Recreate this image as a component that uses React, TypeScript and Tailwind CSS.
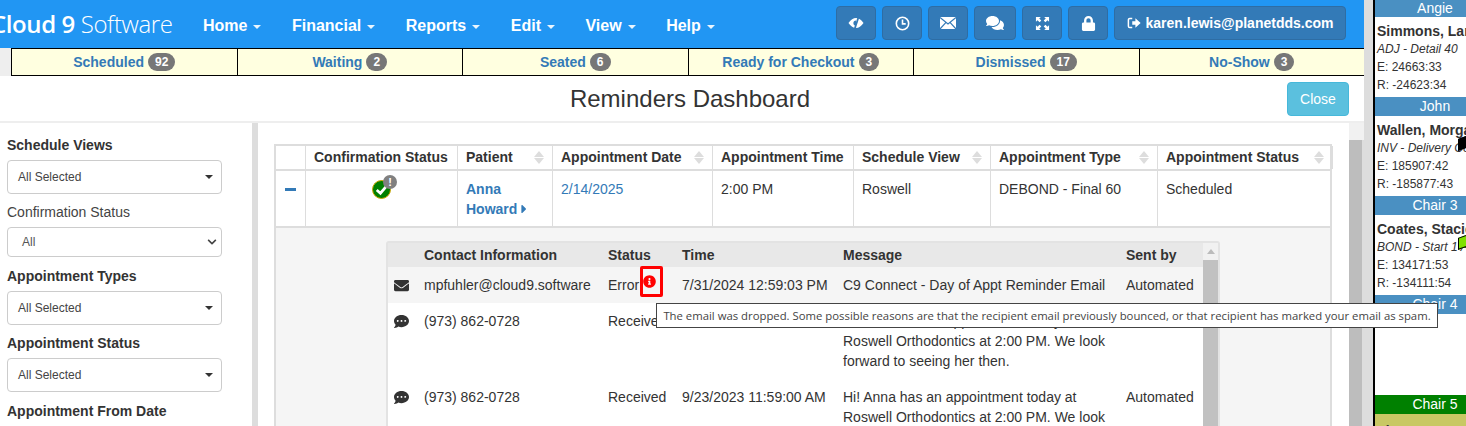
import React from 'react'
import { FaEnvelope, FaComments, FaCommentDots, FaLock, FaCaretRight, FaChevronDown, FaInfoCircle } from 'react-icons/fa'

const navItems = ['Home', 'Financial', 'Reports', 'Edit', 'View', 'Help']

const statusTabs = [
  { label: 'Scheduled', count: 92 },
  { label: 'Waiting', count: 2 },
  { label: 'Seated', count: 6 },
  { label: 'Ready for Checkout', count: 3 },
  { label: 'Dismissed', count: 17 },
  { label: 'No-Show', count: 3 },
]

const EyeClose = () => (
  <svg viewBox="0 0 16 16" className="h-[16px] w-[16px]">
    <path d="M0.5 8 Q4 3 8 3 Q12 3 15.5 8 Q12 13 8 13 Q4 13 0.5 8Z" fill="white" />
    <path d="M8 5.4 A2.6 2.6 0 0 0 8 10.6 Z" fill="#337ab7" />
    <path d="M10.8 1 L6.4 15" stroke="#337ab7" strokeWidth="1.8" />
  </svg>
)

const ClockIcon = () => (
  <svg viewBox="0 0 16 16" className="h-[15px] w-[15px]" fill="none" stroke="white" strokeWidth="1.7">
    <circle cx="8" cy="8" r="6.6" />
    <path d="M8 3.8 V8.4 H11.4" />
  </svg>
)

const MailIcon = () => (
  <svg viewBox="0 0 16 12" className="h-[12px] w-[16px]">
    <rect width="16" height="12" fill="white" />
    <path d="M0 0.5 L8 7 L16 0.5 M0 12 L5.8 5.6 M16 12 L10.2 5.6" fill="none" stroke="#337ab7" strokeWidth="1.2" />
  </svg>
)

const FullscreenIcon = () => (
  <svg viewBox="0 0 16 16" className="h-[15px] w-[15px]" fill="white">
    <path d="M1 1h5.2L4.5 2.7l2.2 2.2-1.8 1.8-2.2-2.2L1 6.2z" />
    <path d="M15 1H9.8l1.7 1.7-2.2 2.2 1.8 1.8 2.2-2.2L15 6.2z" />
    <path d="M1 15h5.2l-1.7-1.7 2.2-2.2-1.8-1.8-2.2 2.2L1 9.8z" />
    <path d="M15 15H9.8l1.7-1.7-2.2-2.2 1.8-1.8 2.2 2.2L15 9.8z" />
  </svg>
)

const LogoutIcon = () => (
  <svg viewBox="0 0 16 16" className="h-[14px] w-[14px]">
    <path d="M6 2.8H3.2a1.6 1.6 0 0 0-1.6 1.6v7.2a1.6 1.6 0 0 0 1.6 1.6H6" fill="none" stroke="white" strokeWidth="1.7" />
    <path d="M6 6h3.6V2.6L15.6 8l-6 5.4V10H6z" fill="white" />
  </svg>
)

const iconButtons = [
  { icon: <EyeClose />, w: 'w-[40px]' },
  { icon: <ClockIcon />, w: 'w-[40px]' },
  { icon: <MailIcon />, w: 'w-[40px]' },
  { icon: <FaComments size={18} />, w: 'w-[42px]' },
  { icon: <FullscreenIcon />, w: 'w-[40px]' },
  { icon: <FaLock size={15} />, w: 'w-[40px]' },
]

const columns = [
  { label: '', w: 'w-[30px]' },
  { label: 'Confirmation Status', w: 'w-[152px]' },
  { label: 'Patient', w: 'w-[95px]', sort: true },
  { label: 'Appointment Date', w: 'w-[160px]', sort: true },
  { label: 'Appointment Time', w: 'w-[141px]' },
  { label: 'Schedule View', w: 'w-[137px]', sort: true },
  { label: 'Appointment Type', w: 'w-[167px]', sort: true },
  { label: 'Appointment Status', w: 'w-[175px]', sort: true },
]

const chairs = [
  { name: 'Angie', h: 'h-[17px]', patient: 'Simmons, Lane', type: 'ADJ - Detail 40', e: 'E: 24663:33', r: 'R: -24623:34' },
  { name: 'John', h: 'h-[19px]', patient: 'Wallen, Morgan', type: 'INV - Delivery Consult', e: 'E: 185907:42', r: 'R: -185877:43', tag: 'bg-black' },
  { name: 'Chair 3', h: 'h-[19px]', patient: 'Coates, Stacie', type: 'BOND - Start 1 Arch', e: 'E: 134171:53', r: 'R: -134111:54', tag: 'bg-[#7fe000]' },
]

const messageRows = [
  { time: '', sent: '' },
  { time: '9/23/2023 11:59:00 AM', sent: 'Automated' },
]

const messageLines = ['Hi! Anna has an appointment today at', 'Roswell Orthodontics at 2:00 PM. We look', 'forward to seeing her then.']

const FilterSelect = ({ label }: { label: string }) => (
  <div className="mt-[8px] mb-[8px]">
    <div className="h-[20px] text-[14px] leading-[20px] font-bold text-[#333]">{label}</div>
    <div className="mt-[5px] flex h-[34px] w-[215px] items-center justify-between rounded-[4px] border border-[#ccc] bg-white pr-[8px] pl-[10px] text-[12px] text-[#444]">
      All Selected
      <span className="h-0 w-0 border-x-[4px] border-t-[4px] border-x-transparent border-t-[#333]" />
    </div>
  </div>
)

const SortIcon = () => (
  <span className="ml-auto flex shrink-0 flex-col gap-[1px]">
    <span className="h-0 w-0 border-x-[5px] border-b-[6px] border-x-transparent border-b-[#ddd]" />
    <span className="h-0 w-0 border-x-[5px] border-t-[6px] border-x-transparent border-t-[#ddd]" />
  </span>
)

export default function App() {
  return (
    <div className="flex h-[426px] w-[1466px] overflow-hidden bg-white font-['Liberation_Sans',Arial,sans-serif] text-[14px] text-[#333]">
      {/* main app column */}
      <div className="relative flex w-[1364px] shrink-0 flex-col">
        <header className="flex h-[48px] shrink-0 items-center bg-[#2196f3] text-white">
          <div className="-ml-[9px] w-[212px] shrink-0 font-['Open_Sans',sans-serif] text-[24px] leading-none tracking-[-0.4px] whitespace-nowrap">
            <span className="font-semibold">Cloud 9</span> <span className="font-light">Software</span>
          </div>
          <nav className="mt-[3px] flex gap-[30.5px]">
            {navItems.map((item) => (
              <span key={item} className="flex items-center gap-[6px] text-[16px] font-bold">
                {item}
                <span className="mt-[2px] h-0 w-0 border-x-[4px] border-t-[4px] border-x-transparent border-t-white/90" />
              </span>
            ))}
          </nav>
          <div className="mr-[18px] mb-[2px] ml-auto flex h-[34px] gap-[6px]">
            {iconButtons.map((b, i) => (
              <span key={i} className={`flex items-center justify-center rounded-[4px] border border-[#2e6da4] bg-[#337ab7] ${b.w}`}>
                {b.icon}
              </span>
            ))}
            <span className="flex w-[232px] items-center justify-center gap-[5px] rounded-[4px] border border-[#2e6da4] bg-[#337ab7] text-[14px] font-bold">
              <LogoutIcon />
              karen.lewis@planetdds.com
            </span>
          </div>
        </header>

        <div className="flex h-[28px] shrink-0 bg-[#eee] pl-[11px]">
          {statusTabs.map((t) => (
            <div key={t.label} className="flex flex-1 items-center justify-center gap-[4px] border-y border-l border-black bg-[#ffffe0] text-[14px] font-bold text-[#337ab7]">
              {t.label}
              <span className="rounded-[10px] bg-[#777] px-[7px] py-[2px] text-[12px] leading-[14px] text-white">{t.count}</span>
            </div>
          ))}
        </div>

        <div className="relative flex h-[47px] shrink-0 items-center justify-center border-b-2 border-[#eee] pt-[1px] pl-[16px] text-[24px]">
          Reminders Dashboard
          <span className="absolute top-[6px] right-[15px] flex h-[34px] w-[62px] items-center justify-center rounded-[4px] border border-[#46b8da] bg-[#5bc0de] pt-[1px] text-[14px] text-white">
            Close
          </span>
        </div>

        <div className="flex min-h-0 flex-1">
          <aside className="w-[252px] shrink-0 overflow-hidden pl-[7px]">
            <div className="pt-[4px]">
              <FilterSelect label="Schedule Views" />
            </div>
            <div className="mb-[9px]">
              <div className="h-[20px] leading-[20px] text-[#444]">Confirmation Status</div>
              <div className="mt-[5px] flex h-[30px] w-[215px] items-center justify-between rounded-[4px] border border-[#ccc] bg-white pr-[4px] pl-[14px] text-[12px] text-[#555]">
                All
                <FaChevronDown size={10} className="text-[#444]" />
              </div>
            </div>
            <FilterSelect label="Appointment Types" />
            <FilterSelect label="Appointment Status" />
            <div className="mt-[9px] text-[14px] font-bold">Appointment From Date</div>
          </aside>

          <div className="w-[6px] shrink-0 bg-[#ddd]" />

          <section className="w-[1091px] shrink-0 overflow-hidden pt-[21px] pl-[16px]">
            <div className="w-[1058px] border-2 border-b-0 border-[#ddd]">
              <div className="flex h-[25px] border-b-2 border-[#ddd]">
                {columns.map((c, i) => (
                  <div key={i} className={`flex shrink-0 items-center border-r border-[#ddd] px-[8px] font-bold whitespace-nowrap ${c.w}`}>
                    {c.label}
                    {c.sort && <SortIcon />}
                  </div>
                ))}
              </div>
              <div className="flex h-[57px] border-b-2 border-[#ddd]">
                <div className="w-[30px] shrink-0 border-r border-[#ddd] pt-[17px] pl-[9px]">
                  <div className="h-[3px] w-[11px] bg-[#337ab7]" />
                </div>
                <div className="flex w-[152px] shrink-0 justify-center border-r border-[#ddd] pt-[9px]">
                  <div className="relative h-[19px] w-[19px] rounded-full border border-[#c9a400] bg-[#008000]">
                    <svg viewBox="0 0 16 16" className="absolute inset-0 h-full w-full" fill="none" stroke="white" strokeWidth="2.6">
                      <path d="M3.5 8.5 L7 11.5 L12.5 5" />
                    </svg>
                    <span className="absolute -top-[6px] -right-[7px] flex h-[14px] w-[14px] items-center justify-center rounded-full bg-[#808080] text-[11px] font-bold text-white">!</span>
                  </div>
                </div>
                <div className="w-[95px] shrink-0 border-r border-[#ddd] px-[8px] pt-[8px] leading-[20px] font-bold text-[#337ab7]">
                  Anna<br />
                  <span className="inline-flex items-center whitespace-nowrap">Howard<FaCaretRight size={14} /></span>
                </div>
                <div className="w-[160px] shrink-0 border-r border-[#ddd] px-[8px] pt-[8px] text-[#337ab7]">2/14/2025</div>
                <div className="w-[141px] shrink-0 border-r border-[#ddd] px-[8px] pt-[8px]">2:00 PM</div>
                <div className="w-[137px] shrink-0 border-r border-[#ddd] px-[8px] pt-[8px]">Roswell</div>
                <div className="w-[167px] shrink-0 border-r border-[#ddd] px-[8px] pt-[8px]">DEBOND - Final 60</div>
                <div className="w-[175px] shrink-0 px-[8px] pt-[8px]">Scheduled</div>
              </div>

              <div className="h-[300px] bg-[#f5f5f5] pt-[13px] pl-[110px]">
                <div className="flex h-[300px] w-[834px] rounded-t-[3px] border-2 border-b-0 border-[#e3e3e3] bg-white">
                  <div className="w-[815px] shrink-0">
                    <div className="flex h-[24px] items-center bg-[#e8e8e8] font-bold">
                      <span className="w-[36px] shrink-0" />
                      <span className="w-[184px] shrink-0">Contact Information</span>
                      <span className="w-[74px] shrink-0">Status</span>
                      <span className="w-[161px] shrink-0">Time</span>
                      <span className="w-[283px] shrink-0">Message</span>
                      <span>Sent by</span>
                    </div>
                    <div className="flex h-[36px] items-center bg-[#f5f5f5]">
                      <span className="flex w-[36px] shrink-0 justify-center pr-[9px]"><FaEnvelope size={15} /></span>
                      <span className="w-[184px] shrink-0">mpfuhler@cloud9.software</span>
                      <span className="relative w-[74px] shrink-0">
                        Error
                        <span className="absolute -top-[9px] left-[32px] flex h-[31px] w-[23px] items-center rounded-[2px] border-[3px] border-[#f00]">
                          <FaInfoCircle size={13} className="text-[#f00]" />
                        </span>
                      </span>
                      <span className="w-[161px] shrink-0">7/31/2024 12:59:03 PM</span>
                      <span className="w-[283px] shrink-0">C9 Connect - Day of Appt Reminder Email</span>
                      <span>Automated</span>
                    </div>
                    {messageRows.map((row, i) => (
                      <div key={i} className="flex h-[76px] pt-[8px] leading-[20px]">
                        <span className="flex h-[20px] w-[36px] shrink-0 items-center justify-center pr-[9px]"><FaCommentDots size={15} /></span>
                        <span className="w-[184px] shrink-0">(973) 862-0728</span>
                        <span className="w-[74px] shrink-0">Received</span>
                        <span className="w-[161px] shrink-0">{row.time}</span>
                        <span className="w-[283px] shrink-0">{messageLines.map((m) => <div key={m}>{m}</div>)}</span>
                        <span>{row.sent}</span>
                      </div>
                    ))}
                  </div>
                  <div className="flex-1 bg-[#f1f1f1]">
                    <div className="flex h-[17px] items-center justify-center">
                      <span className="h-0 w-0 border-x-[4px] border-b-[5px] border-x-transparent border-b-[#bbb]" />
                    </div>
                    <div className="h-[300px] bg-[#c1c1c1]" />
                  </div>
                </div>
              </div>
            </div>
          </section>

          {/* page scrollbar */}
          <div className="w-[15px] shrink-0 bg-[#ddd]">
            <div className="h-[17px] bg-[#f1f1f1]" />
            <div className="h-[300px] w-[13px] bg-[#bdbdbd]" />
          </div>
        </div>

        {/* hover tooltip over the message rows */}
        <div className="absolute top-[303px] left-[656px] z-10 flex h-[25px] w-[782px] items-center justify-center border border-[#444] bg-white font-['Open_Sans',sans-serif] text-[11.34px] whitespace-nowrap text-[#444]">
          The email was dropped. Some possible reasons are that the recipient email previously bounced, or that recipient has marked your email as spam.
        </div>
      </div>

      <div className="w-[9px] shrink-0 bg-[#ddd]" />

      {/* chair sidebar */}
      <div className="flex w-[93px] shrink-0 flex-col overflow-hidden border-l-2 border-black">
        {chairs.map((c) => (
          <div key={c.name} className="w-[120px]">
            <div className={`flex items-center justify-center bg-[#4a90c2] text-[14px] text-white ${c.h}`}>{c.name}</div>
            <div className="relative h-[80px] px-[2px] pt-[4px] text-[12px]">
              <div className="text-[14px] leading-[20px] font-bold whitespace-nowrap">{c.patient}</div>
              <div className="leading-[17px] whitespace-nowrap italic">{c.type}</div>
              <div className="leading-[18px]">{c.e}</div>
              <div className="leading-[18px]">{c.r}</div>
              {c.tag && <span className={`absolute top-[20px] left-[83px] h-[12px] w-[16px] -skew-y-[20deg] border border-black ${c.tag}`} />}
            </div>
          </div>
        ))}
        <div className="w-[120px]">
          <div className="flex h-[19px] items-center justify-center bg-[#4a90c2] text-[14px] text-white">Chair 4</div>
          <div className="h-[81px]" />
          <div className="flex h-[19px] items-center justify-center bg-[#008000] text-[14px] text-white">Chair 5</div>
          <div className="h-[20px] bg-[#c8c864] px-[2px] pt-[7px] text-[14px] leading-[20px] font-bold">Idaza, Ana</div>
        </div>
      </div>
    </div>
  )
}
